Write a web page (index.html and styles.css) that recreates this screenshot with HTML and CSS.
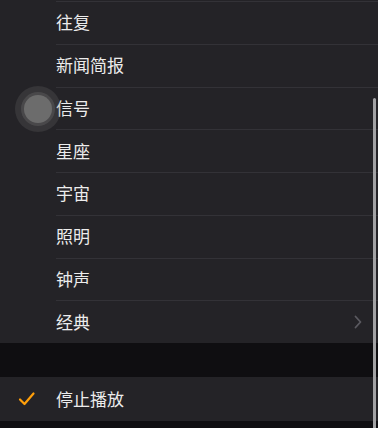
FILE: index.html
```html
<!DOCTYPE html>
<html lang="zh">
<head>
<meta charset="utf-8">
<link rel="stylesheet" href="styles.css">
</head>
<body>
<div class="screen">
  <ul class="group group-top">
    <li class="row"><span class="label">往复</span></li>
    <li class="row"><span class="label">新闻简报</span></li>
    <li class="row"><span class="label">信号</span></li>
    <li class="row"><span class="label">星座</span></li>
    <li class="row"><span class="label">宇宙</span></li>
    <li class="row"><span class="label">照明</span></li>
    <li class="row"><span class="label">钟声</span></li>
    <li class="row"><span class="label">经典</span>
      <svg class="chevron" width="8" height="14" viewBox="0 0 8 14"><path d="M1.5 1.5 L6.5 7 L1.5 12.5" fill="none" stroke="#5b5a60" stroke-width="1.8" stroke-linecap="round" stroke-linejoin="round"/></svg>
    </li>
  </ul>
  <div class="gap"></div>
  <ul class="group">
    <li class="row row-first">
      <svg class="check" width="18" height="16" viewBox="0 0 18 16"><path d="M2 8.5 L6.5 13 L15.5 2.5" fill="none" stroke="#ff9f0a" stroke-width="2.2" stroke-linecap="round" stroke-linejoin="round"/></svg>
      <span class="label">停止播放</span>
    </li>
  </ul>
  <div class="scrollbar"></div>
  <div class="touch"><div class="touch-inner"></div></div>
</div>
</body>
</html>
```

FILE: styles.css
```css
html, body {
  margin: 0;
  padding: 0;
  background: #0f0e11;
}
.screen {
  position: relative;
  width: 378px;
  height: 428px;
  overflow: hidden;
  font-family: "Noto Sans CJK SC", "Noto Sans", sans-serif;
}
.group {
  list-style: none;
  margin: 0;
  padding: 0;
  background: #242327;
}
.group-top {
  padding-top: 1px;
}
.row {
  position: relative;
  height: 42.75px;
  display: flex;
  align-items: center;
  padding-left: 56px;
  padding-right: 16px;
  box-sizing: border-box;
}
.group-top .row::before {
  content: "";
  position: absolute;
  left: 56px;
  right: 0;
  top: 0;
  height: 1px;
  background: #333237;
}
.row-first {
  height: 44px;
}
.label {
  flex: 1;
  color: #ececec;
  font-size: 17px;
  line-height: 20px;
}
.chevron {
  margin-right: 0;
}
.check {
  position: absolute;
  left: 18px;
  top: 14px;
}
.gap {
  height: 34px;
}
.scrollbar {
  position: absolute;
  left: 373px;
  top: 98px;
  width: 3px;
  height: 340px;
  border-radius: 2px;
  background: #a2a2a4;
}
.touch {
  position: absolute;
  left: 15px;
  top: 86px;
  width: 46px;
  height: 46px;
  border-radius: 50%;
  background: rgba(120, 120, 120, 0.22);
  display: flex;
  align-items: center;
  justify-content: center;
}
.touch-inner {
  width: 28px;
  height: 28px;
  border-radius: 50%;
  background: #6c6c6c;
  box-shadow: 0 0 0 3px rgba(110, 110, 110, 0.35);
}
```
